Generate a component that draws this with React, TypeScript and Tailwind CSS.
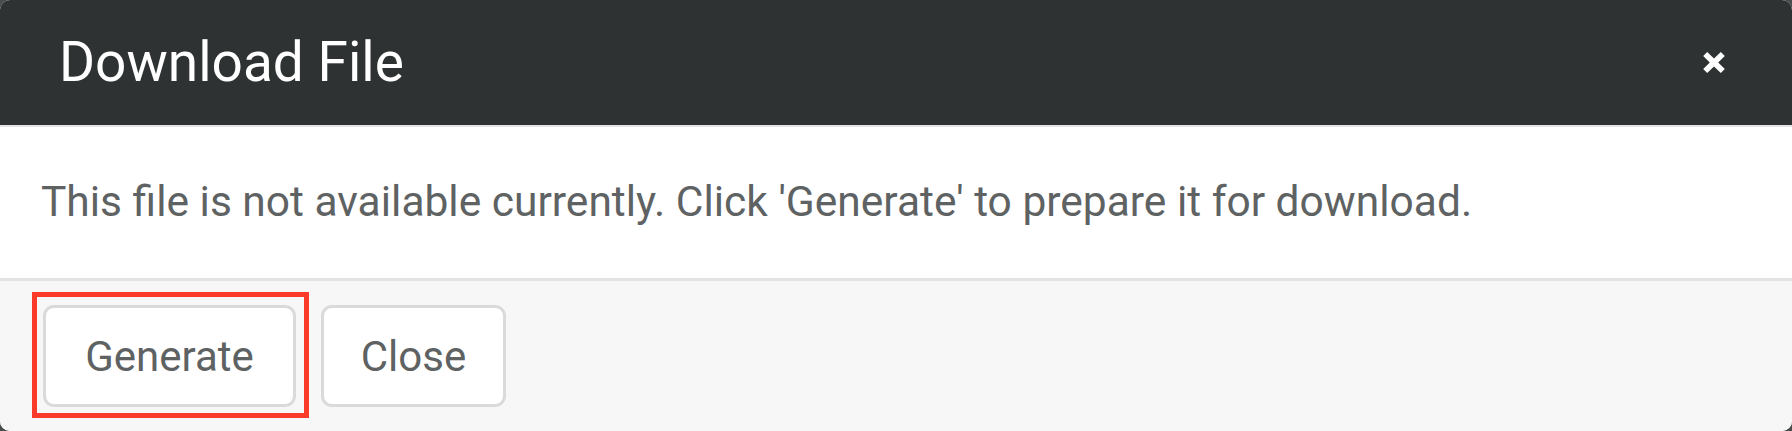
import { useState } from "react";

function CloseIcon() {
  return (
    <svg width="22" height="25" viewBox="0 0 22 25" fill="white" aria-hidden="true">
      <path d="M4.2 2 L11 8.6 L17.8 2 L21.8 6 L15.2 12.5 L21.8 19 L17.8 23 L11 16.4 L4.2 23 L0.2 19 L6.8 12.5 L0.2 6 Z" />
    </svg>
  );
}

export default function App() {
  const [open, setOpen] = useState(true);

  return (
    <div className="w-[1792px] h-[431px] bg-[#4a4d4e]" style={{ fontFamily: "Roboto, 'Noto Sans', sans-serif" }}>
      <div className="h-full flex flex-col rounded-[10px] overflow-hidden bg-white">
        <div className="h-[125px] shrink-0 bg-[#2e3233] flex items-center justify-between pl-[59px] pr-[67px]">
          <h2 className="text-[55px] leading-none text-white">Download File</h2>
          <button type="button" onClick={() => setOpen(!open)} className="p-0">
            <CloseIcon />
          </button>
        </div>
        <div className="h-[2px] bg-[#e4e4e4]" />
        <div className="h-[151px] shrink-0 flex items-center pl-[41px]">
          <p className="text-[42.5px] leading-none text-[#5e6263]">
            This file is not available currently. Click 'Generate' to prepare it for download.
          </p>
        </div>
        <div className="h-[3px] bg-[#e3e3e3]" />
        <div className="flex-1 bg-[#f7f7f7] flex items-center gap-[25px] pl-[43px]">
          <div className="relative">
            <button
              type="button"
              className="w-[253px] h-[102px] bg-white border-[3px] border-[#dadada] rounded-[11px] text-[42px] text-[#5e6263]"
            >
              Generate
            </button>
            <div className="absolute -left-[11px] -top-[13px] -right-[13px] -bottom-[11px] border-[5px] border-[#fb3b2a] pointer-events-none" />
          </div>
          <button
            type="button"
            className="w-[185px] h-[102px] bg-white border-[3px] border-[#dadada] rounded-[11px] text-[42px] text-[#5e6263]"
          >
            Close
          </button>
        </div>
      </div>
    </div>
  );
}
